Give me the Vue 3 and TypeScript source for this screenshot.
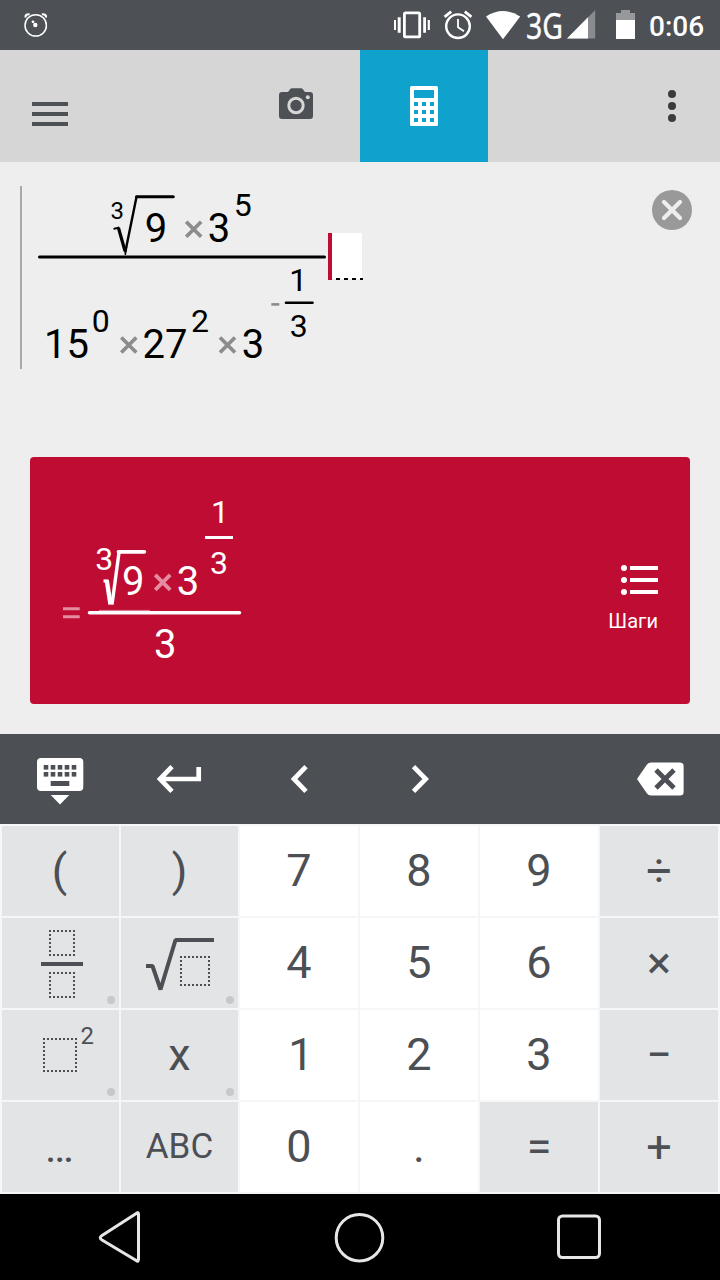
<script setup lang="ts">
type KeyKind = 'digit' | 'op'
interface Key {
  id: string
  label?: string
  kind: KeyKind
  cls?: string
  more?: boolean
}

const keys: Key[] = [
  { id: 'open', label: '(', kind: 'op', cls: 'paren' },
  { id: 'close', label: ')', kind: 'op' },
  { id: '7', label: '7', kind: 'digit' },
  { id: '8', label: '8', kind: 'digit' },
  { id: '9', label: '9', kind: 'digit' },
  { id: 'div', label: '÷', kind: 'op' },
  { id: 'frac', kind: 'op', more: true },
  { id: 'sqrt', kind: 'op', more: true },
  { id: '4', label: '4', kind: 'digit' },
  { id: '5', label: '5', kind: 'digit' },
  { id: '6', label: '6', kind: 'digit' },
  { id: 'mul', label: '×', kind: 'op' },
  { id: 'square', kind: 'op', more: true },
  { id: 'x', label: 'x', kind: 'op', more: true },
  { id: '1', label: '1', kind: 'digit', cls: 'one' },
  { id: '2', label: '2', kind: 'digit' },
  { id: '3', label: '3', kind: 'digit' },
  { id: 'minus', label: '−', kind: 'op' },
  { id: 'dots', label: '…', kind: 'op', cls: 'dots' },
  { id: 'abc', label: 'ABC', kind: 'op', cls: 'small' },
  { id: '0', label: '0', kind: 'digit' },
  { id: 'point', label: '.', kind: 'digit' },
  { id: 'eq', label: '=', kind: 'op' },
  { id: 'plus', label: '+', kind: 'op' },
]

const padCols = [0, 1, 2, 3, 4]
const calcCells = [0, 1, 2]
</script>

<template>
  <div class="screen">
    <div class="status">
      <svg width="720" height="50" viewBox="0 0 720 50">
        <g fill="none" stroke="#fff">
          <circle cx="35.7" cy="25.4" r="10.7" stroke-width="1.5" />
          <path d="M25.6 17.5Q25 14 29.6 14.3M41.8 14.3Q46.6 14 45.9 17.5" stroke-width="2.2" />
        </g>
        <circle cx="35.3" cy="25" r="2.2" fill="#fff" />
        <circle cx="33" cy="21.8" r="1.4" fill="#fff" />
        <g fill="#fff">
          <path d="M394 20h2v10h-2zM397.700 17.300h3v15.400h-3zM423.200 17.300h2.800v15.400h-2.800zM427.700 20h2.200v10h-2.200z" />
        </g>
        <rect x="404.400" y="12.900" width="15.300" height="24" rx="1.200" fill="none" stroke="#fff" stroke-width="2.800" />
        <g fill="none" stroke="#fff" stroke-width="2.400">
          <circle cx="458" cy="26.200" r="11.800" />
          <path d="M458 19v8.300l6 4" stroke-width="1.800" />
          <path d="M444.600 16.800l6.600-5.200M471.400 16.800l-6.600-5.200" stroke-width="2.800" />
        </g>
        <path d="M486 16.600Q503 5.600 520.200 16.600L503 39.200z" fill="#fff" />
        <text class="net" transform="translate(526 39.200) scale(.79 1)">3G</text>
        <path d="M567 38.600L595.200 10v28.600z" fill="#8a8b8f" />
        <path d="M567 38.600L588 17.300v21.300z" fill="#fff" />
        <path d="M616 13h5v-3h9v3h5v26h-19z" fill="#97989b" />
        <path d="M616 20h19v19h-19z" fill="#fff" />
        <text class="clock" x="649" y="36">0:06</text>
      </svg>
    </div>

    <div class="header">
      <div class="menu">
        <svg width="36" height="24" viewBox="0 0 36 24" fill="#4d5055">
          <path d="M0 0h36v4H0zM0 10h36v4H0zM0 20h36v4H0z" />
        </svg>
      </div>
      <div class="tab">
        <svg width="34" height="31" viewBox="0 0 34 31">
          <path d="M3 4h6l2.500-3.200Q12 .2 13 .2h9q1 0 1.500.6L26 4h5q3 0 3 3v21q0 3-3 3H3q-3 0-3-3V7q0-3 3-3z" fill="#4d5055" />
          <circle cx="17" cy="17.500" r="7.200" fill="none" stroke="#d6d6d6" stroke-width="3" />
          <circle cx="28.800" cy="9.200" r="2" fill="#d6d6d6" />
        </svg>
      </div>
      <div class="tab active">
        <svg width="28" height="40" viewBox="0 0 28 40">
          <rect width="28" height="40" rx="1.500" fill="#fff" />
          <rect x="4" y="4" width="20" height="8" fill="#0fa2cd" />
          <template v-for="r in calcCells" :key="r">
            <rect v-for="c in calcCells" :key="c" :x="4 + c * 8" :y="16 + r * 8" width="4" height="4" fill="#0fa2cd" />
          </template>
        </svg>
      </div>
      <div class="overflow">
        <svg width="8" height="32" viewBox="0 0 8 32" fill="#3c3c3c">
          <circle cx="4" cy="4" r="4" /><circle cx="4" cy="16" r="4" /><circle cx="4" cy="28" r="4" />
        </svg>
      </div>
    </div>

    <div class="editor">
      <svg width="720" height="295" viewBox="0 162 720 295">
        <rect x="20" y="186" width="2" height="183" fill="#a9a9a9" />
        <g fill="none" stroke="#000" stroke-linecap="round">
          <path d="M39.500 257H324.500" stroke-width="3" />
          <path d="M286 302.800H312.500" stroke-width="2.600" />
          <path d="M136.500 196.800H173.300" stroke-width="3" />
          <path d="M125.500 251L136.500 197" stroke-width="2.400" />
          <path d="M114.300 228.800L118.500 227.600" stroke-width="2" />
          <path d="M118.500 228L125 251" stroke-width="3.200" stroke-linecap="butt" />
        </g>
        <path d="M123.500 247h3.800l-1.300 8h-1.200z" />
        <g class="s24"><text x="110.600" y="219.300">3</text></g>
        <g class="s40">
          <text x="144.700" y="242">9</text>
          <text x="207.700" y="242">3</text>
          <text x="44" y="358">15</text>
          <text x="142.600" y="358">27</text>
          <text x="241.800" y="358">3</text>
        </g>
        <g class="s32">
          <text x="233.800" y="215.600">5</text>
          <text x="289.300" y="291">1</text>
          <text x="289.800" y="336.600">3</text>
          <text x="91.800" y="331.800">0</text>
          <text x="191" y="331.800">2</text>
        </g>
        <g stroke="#8c8c8c" stroke-width="3.700">
          <path d="M186.200 221.700l15 15m0-15l-15 15M121.300 337.500l15 15m0-15l-15 15M220 337.500l15 15m0-15l-15 15" />
          <path d="M271.300 304.400h8" stroke-width="2.600" />
        </g>
        <rect x="332" y="233" width="30" height="46" fill="#fff" />
        <rect x="328" y="233" width="4" height="47" fill="#be0c32" />
        <path d="M336 279H363" stroke="#000" stroke-width="2" stroke-dasharray="4 4" />
        <circle cx="672" cy="210" r="20" fill="#999" />
        <path d="M664 202l16 16m0-16l-16 16" stroke="#eee" stroke-width="4.200" stroke-linecap="round" />
      </svg>
    </div>

    <div class="card">
      <svg width="560" height="247" viewBox="30 457 560 247">
        <g fill="none" stroke="#fff">
          <path d="M89.500 612.700H239.500" stroke-width="3.600" stroke-linecap="round" />
          <path d="M205 537.500H233" stroke-width="3" />
          <path d="M118.500 551.800H144.300" stroke-width="3.800" stroke-linecap="round" />
          <path d="M112 604.500L119.200 551" stroke-width="3.400" />
          <path d="M103.500 581H108" stroke-width="3.200" />
          <path d="M106.700 580L110.500 604.500" stroke-width="4.400" />
          <path d="M99 610.400H150" stroke-width="1" opacity=".5" />
        </g>
        <g class="white">
          <g class="s32">
            <text x="95.200" y="569.600">3</text>
            <text x="211" y="523">1</text>
            <text x="210" y="573.600">3</text>
          </g>
          <g class="s40">
            <text x="122" y="594.600">9</text>
            <text x="176.700" y="594.600">3</text>
            <text x="154" y="658">3</text>
          </g>
        </g>
        <g stroke="#e58ca0" stroke-width="3.800">
          <path d="M155.200 574.800l15 15m0-15l-15 15" />
          <path d="M63 608.800H79.700M63 616.800H79.700" stroke-width="3" />
        </g>
      </svg>
      <div class="steps">
        <svg width="38" height="30" viewBox="0 0 38 30" fill="#fff">
          <circle cx="4" cy="3" r="3" /><circle cx="4" cy="15" r="3" /><circle cx="4" cy="27" r="3" />
          <path d="M10 1h28v4H10zM10 13h28v4H10zM10 25h28v4H10z" />
        </svg>
        <span>Шаги</span>
      </div>
    </div>

    <div class="toolbar">
      <svg width="720" height="90" viewBox="0 734 720 90">
        <rect x="37" y="758" width="46.300" height="33" rx="4" fill="#fff" />
        <g fill="#4c4f54">
          <template v-for="c in padCols" :key="c">
            <rect :x="43.700 + c * 7" y="765" width="4.600" height="4.600" />
            <rect :x="43.700 + c * 7" y="772" width="4.600" height="4.600" />
          </template>
          <rect x="50.700" y="781" width="18.600" height="5" />
        </g>
        <path d="M50.700 795h18.600L60 804.600z" fill="#fff" />
        <g fill="none" stroke="#fff" stroke-width="4.700">
          <path d="M172 766.700L160 779L172 791.300M160 779H198.700V767" />
          <path d="M306 766.700L294 779L306 791.300" />
          <path d="M413.500 766.700L425.700 779L413.500 791.300" />
        </g>
        <path d="M637 779L647 764.500Q648.500 762.500 651 762.500H680Q683.600 762.500 683.600 766V792Q683.600 795.500 680 795.500H651Q648.500 795.500 647 793.500z" fill="#fff" />
        <path d="M656 770l18 18m0-18l-18 18" stroke="#4c4f54" stroke-width="4.800" />
      </svg>
    </div>

    <div class="keypad">
      <div v-for="k in keys" :key="k.id" class="key" :class="[k.kind, k.cls]">
        <span v-if="k.label">{{ k.label }}</span>
        <svg v-else-if="k.id === 'frac'" width="117" height="90" viewBox="2 918 117 90">
          <path d="M41 964H83" stroke="#4c4f54" stroke-width="4" />
          <g class="box">
            <rect x="50" y="931" width="24" height="24" />
            <rect x="50" y="973" width="24" height="24" />
          </g>
        </svg>
        <svg v-else-if="k.id === 'sqrt'" width="117" height="90" viewBox="121 918 117 90">
          <path d="M146 966H152.500L160.500 989.500L175.500 940H214" fill="none" stroke="#4c4f54" stroke-width="4" stroke-linejoin="bevel" />
          <g class="box"><rect x="181" y="957" width="28" height="28" /></g>
        </svg>
        <svg v-else width="117" height="90" viewBox="2 1010 117 90">
          <g class="box"><rect x="44" y="1039" width="32" height="32" /></g>
          <text class="sup" x="80.600" y="1044">2</text>
        </svg>
        <i v-if="k.more" class="more"></i>
      </div>
    </div>

    <div class="nav">
      <svg width="720" height="86" viewBox="0 1194 720 86" fill="none" stroke="#e6e6e6" stroke-width="3">
        <path d="M136.200 1213.500Q138.500 1211.500 138.500 1214.500V1259Q138.500 1262.500 136.200 1260.500L102 1240Q98.500 1237.800 102 1235.500z" />
        <circle cx="359.500" cy="1237.700" r="23.300" />
        <rect x="558.500" y="1216" width="41" height="41.500" rx="4" />
      </svg>
    </div>
  </div>
</template>

<style>
body {
  background: #000;
}
</style>

<style scoped>
.screen {
  width: 720px;
  height: 1280px;
  display: flex;
  flex-direction: column;
  background: #eee;
  font-family: Roboto, "Noto Sans", sans-serif;
  overflow: hidden;
}
svg {
  display: block;
}
.status {
  height: 50px;
  background: #4d5055;
}
.net {
  font-family: "Noto Sans", sans-serif;
  font-size: 36px;
  fill: #fff;
  stroke: #fff;
  stroke-width: 0.4;
}
.clock {
  font-size: 28px;
  font-weight: 500;
  fill: #fff;
}
.header {
  height: 112px;
  background: #d6d6d6;
  display: flex;
  align-items: stretch;
}
.menu {
  width: 232px;
  box-sizing: border-box;
  padding: 52px 0 0 32px;
}
.tab {
  width: 128px;
  display: flex;
  align-items: center;
  justify-content: center;
}
.tab:not(.active) {
  padding-bottom: 5px;
  box-sizing: border-box;
}
.active {
  background: #0fa2cd;
}
.overflow {
  flex: 1;
  display: flex;
  align-items: center;
  justify-content: flex-end;
  padding-right: 44px;
}
.editor {
  height: 295px;
}
.s24 { font-size: 24px; }
.s32 { font-size: 32px; }
.s40 { font-size: 40px; }
.white { fill: #fff; }
.card {
  height: 247px;
  margin: 0 30px 30px;
  border-radius: 4px;
  background: #be0c32;
  display: flex;
}
.steps {
  flex: 1;
  display: flex;
  flex-direction: column;
  align-items: flex-end;
  padding: 108px 32px 0 0;
  color: #fff;
  font-size: 20px;
  line-height: 24px;
}
.steps span {
  margin-top: 14px;
}
.toolbar {
  height: 90px;
  background: #4c4f54;
}
.keypad {
  display: grid;
  grid-template-columns: 117px 117px repeat(4, 118px);
  grid-auto-rows: 90px;
  gap: 2px;
  padding: 2px;
  background: #f5f6f7;
}
.key {
  display: flex;
  justify-content: center;
  position: relative;
  box-sizing: border-box;
  background: #fff;
  color: #4c4f54;
  font-size: 45px;
  line-height: 90px;
}
.op {
  background: #e3e4e6;
}
.small {
  font-size: 35px;
}
.paren {
  padding-right: 2px;
}
.one {
  padding-left: 4px;
}
.dots {
  font-size: 43px;
  padding-right: 2px;
}
.sup {
  font-size: 24px;
  fill: #4c4f54;
}
.box rect {
  fill: none;
  stroke: #4c4f54;
  stroke-width: 2;
  stroke-dasharray: 2 2;
  stroke-dashoffset: 1;
}
.more {
  position: absolute;
  right: 4px;
  bottom: 4px;
  width: 8px;
  height: 8px;
  border-radius: 50%;
  background: #c7c8ca;
}
.nav {
  height: 86px;
  background: #000;
}
</style>
